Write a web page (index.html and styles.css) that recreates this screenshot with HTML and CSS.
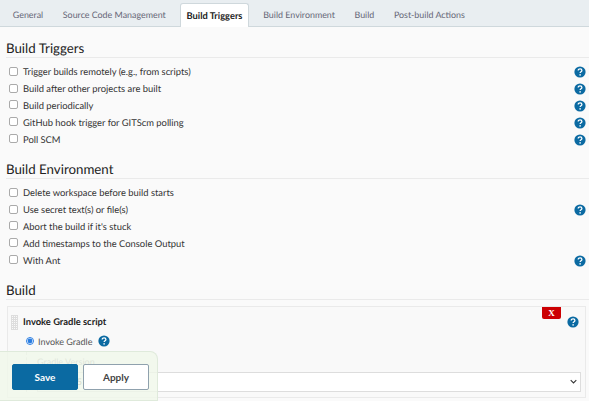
FILE: index.html
```html
<!DOCTYPE html>
<html lang="en">
<head>
<meta charset="utf-8">
<title>Build Triggers</title>
<link rel="stylesheet" href="styles.css">
</head>
<body>
<svg class="defs" width="0" height="0" aria-hidden="true"><defs>
<symbol id="help" viewBox="0 0 12 12"><circle cx="6" cy="6" r="5.6" fill="#0b6aa2"/><path d="M4.2 4.6c0-1.1.8-1.8 1.9-1.8s1.8.7 1.8 1.6c0 1.3-1.8 1.4-1.8 2.7" fill="none" stroke="#fff" stroke-width="1.3"/><circle cx="6.1" cy="8.9" r=".8" fill="#fff"/></symbol>
</defs></svg>
<nav class="tabs">
  <a class="tab">General</a>
  <a class="tab">Source Code Management</a>
  <a class="tab active">Build Triggers</a>
  <a class="tab">Build Environment</a>
  <a class="tab">Build</a>
  <a class="tab">Post-build Actions</a>
</nav>
<main class="content">
  <section class="section">
    <h2 class="heading">Build Triggers</h2>
    <label class="row"><input type="checkbox"><span class="label">Trigger builds remotely (e.g., from scripts)</span><svg class="help"><use href="#help"/></svg></label>
    <label class="row"><input type="checkbox"><span class="label">Build after other projects are built</span><svg class="help"><use href="#help"/></svg></label>
    <label class="row"><input type="checkbox"><span class="label">Build periodically</span><svg class="help"><use href="#help"/></svg></label>
    <label class="row"><input type="checkbox"><span class="label">GitHub hook trigger for GITScm polling</span><svg class="help"><use href="#help"/></svg></label>
    <label class="row"><input type="checkbox"><span class="label">Poll SCM</span><svg class="help"><use href="#help"/></svg></label>
  </section>
  <section class="section">
    <h2 class="heading">Build Environment</h2>
    <label class="row"><input type="checkbox"><span class="label">Delete workspace before build starts</span></label>
    <label class="row"><input type="checkbox"><span class="label">Use secret text(s) or file(s)</span><svg class="help"><use href="#help"/></svg></label>
    <label class="row"><input type="checkbox"><span class="label">Abort the build if it's stuck</span></label>
    <label class="row"><input type="checkbox"><span class="label">Add timestamps to the Console Output</span></label>
    <label class="row"><input type="checkbox"><span class="label">With Ant</span><svg class="help"><use href="#help"/></svg></label>
  </section>
  <section class="section">
    <h2 class="heading">Build</h2>
    <div class="card">
      <div class="grip"></div>
      <button class="delete" type="button">X</button>
      <div class="card-head">
        <strong class="card-title">Invoke Gradle script</strong>
        <svg class="help"><use href="#help"/></svg>
      </div>
      <div class="radio-row">
        <input type="radio" name="gradle" checked>
        <span class="radio-label">Invoke Gradle</span>
        <svg class="help"><use href="#help"/></svg>
      </div>
      <div class="version">
        <div class="version-label">Gradle Version</div>
        <div class="select"><span>Gradle 3.5</span><svg class="chevron" viewBox="0 0 10 6"><path d="M1 1l4 4 4-4" fill="none" stroke="#333" stroke-width="1.5"/></svg></div>
      </div>
    </div>
  </section>
</main>
<div class="savebar">
  <button class="btn primary" type="button">Save</button>
  <button class="btn" type="button">Apply</button>
</div>
</body>
</html>
```
FILE: styles.css
```css
* { box-sizing: border-box; }
html, body { height: 100%; }
body {
  margin: 0;
  background: #fafafa;
  color: #333;
  font-family: Lato, Roboto, sans-serif;
  font-size: 9.4px;
  text-rendering: geometricPrecision;
  overflow: hidden;
  position: relative;
}
.defs { position: absolute; }
.tabs {
  display: flex;
  height: 27px;
  padding: 3px 0 0 3px;
  background: #e9eef1;
  border-bottom: 1px solid #cfd8dc;
  font-size: 8.9px;
}
.tab {
  display: flex;
  align-items: center;
  padding: 0 9.8px;
  color: #667;
  white-space: nowrap;
  height: 23px;
}
.tab.active {
  background: #fff;
  color: #222;
  font-weight: 700;
  font-size: 9.3px;
  margin: 0 4px;
  padding: 0 6px;
  border: 1px solid #cfd8dc;
  border-bottom: none;
  border-radius: 3px 3px 0 0;
  height: 24px;
}
.content { padding: 0 0 0 6px; }
.heading {
  margin: 0 0 6px;
  padding: 12px 0 0;
  height: 31px;
  font-size: 13.3px;
  line-height: 18px;
  font-weight: 400;
  color: #222;
  border-bottom: 1px solid #eaeaea;
}
.row {
  display: flex;
  align-items: center;
  height: 16.8px;
  padding-right: 3px;
}
.row input {
  width: 9px;
  height: 9px;
  margin: 0 5px 2px 3px;
  appearance: none;
  background: #fff;
  border: 1px solid #aaa;
  border-radius: 2px;
  flex: none;
}
.label { flex: 1; padding-top: 1px; }
.help { width: 12px; height: 12px; flex: none; }
.card {
  position: relative;
  margin: 1px 3px 0 1px;
  height: 92px;
  border: 1px solid #eaeaea;
  background: #f9f9f9;
  padding: 7px 4px 0 15px;
}
.grip {
  position: absolute;
  left: 3px;
  top: 8px;
  width: 7px;
  height: 15px;
  background-image: repeating-linear-gradient(0deg, #ddd 0 1px, transparent 1px 2px), repeating-linear-gradient(90deg, #ddd 0 1px, transparent 1px 2px);
}
.delete {
  position: absolute;
  right: 24px;
  top: 0;
  width: 19px;
  height: 12px;
  padding: 0;
  border: none;
  border-radius: 0 0 2px 2px;
  background: #cc0003;
  color: #fff;
  font: 700 9px "Liberation Serif", serif;
}
.card-head {
  display: flex;
  justify-content: space-between;
  align-items: center;
  height: 16px;
  margin-right: 2px;
}
.card-title { color: #222; padding-top: 2px; }
.radio-row {
  display: flex;
  align-items: center;
  margin: 3px 0 0 3px;
  height: 16px;
  font-size: 9px;
}
.radio-row input { width: 8px; height: 8px; margin: 0 4px 0 0; accent-color: #2a7de1; }
.radio-label { color: #555; margin-right: 6px; padding-top: 1px; }
.version {
  margin: 3px 0 0 3px;
  border-left: 1px dashed #ddd;
  font-size: 9px;
}
.version-label { color: #999; padding: 3px 0 0 10px; height: 17px; line-height: 14px; }
.select {
  display: flex;
  justify-content: space-between;
  align-items: center;
  margin: 3px 0 0 10px;
  height: 20px;
  background: #fff;
  border: 1px solid #ddd;
  padding: 0 3px;
  color: #555;
}
.chevron { width: 7px; height: 5px; }
.savebar {
  position: absolute;
  left: 0;
  top: 351px;
  width: 158px;
  height: 50px;
  display: flex;
  gap: 5px;
  padding: 12px 0 0 12px;
  background: rgba(240, 248, 234, .8);
  border: 1px solid #dfeadb;
  border-left: none;
  border-radius: 0 8px 0 0;
}
.btn {
  width: 66px;
  height: 26px;
  padding: 0;
  font: 700 10px Lato, sans-serif;
  color: #444;
  background: #fff;
  border: 1px solid #8fa1ad;
  border-radius: 2px;
}
.btn.primary {
  background: #0b6aa2;
  border-color: #0b6aa2;
  color: #fff;
}
```
